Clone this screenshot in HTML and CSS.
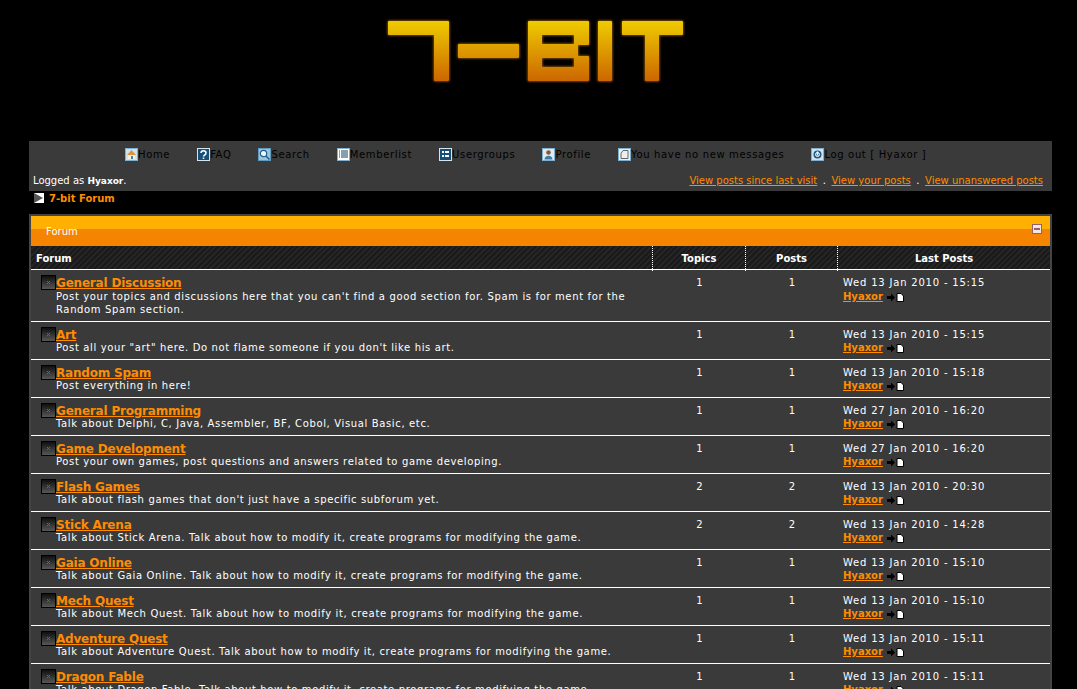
FILE: index.html
```html
<!DOCTYPE html>
<html>
<head>
    <title>7-bit Forum</title>
    <meta name="viewport" content="width=device-width, initial-scale=1">
    <link rel="stylesheet" href="styles.css">
</head>
<body>

<!-- icon sprites -->
<svg class="sprites" width="0" height="0">
    <defs>
        <linearGradient id="logoFill" gradientUnits="userSpaceOnUse" x1="0" y1="21" x2="0" y2="81">
            <stop offset="0" stop-color="#eecc00"/>
            <stop offset="1" stop-color="#cc6600"/>
        </linearGradient>
        <linearGradient id="boardFill" x1="0" y1="0" x2="0" y2="1">
            <stop offset="0" stop-color="#0c0c0c"/>
            <stop offset="1" stop-color="#5a5a5a"/>
        </linearGradient>
        <filter id="logoGlow" x="-10%" y="-20%" width="120%" height="140%">
            <feGaussianBlur stdDeviation="0.8"/>
        </filter>
        <path id="logoMark" fill-rule="evenodd" stroke-linejoin="round" d="M389 22H448V80H435V34H389Z M459 45H518V57H459Z M529 22H588V44H577V57H588V80H529Z M541 34V45H575V34Z M541 57V68H575V57Z M599 22H611V80H599Z M623 22H682V34H658V80H646V34H623Z"/>
        <symbol id="i-board" viewBox="0 0 15 15">
            <rect x="0.5" y="0.5" width="14" height="14" fill="url(#boardFill)" stroke="#000"/>
            <path d="M6 6l3 3M9 6l-3 3" stroke="#666"/>
        </symbol>
        <symbol id="i-go" viewBox="0 0 17 9">
            <path d="M0 3h4V0.500L8 4.500 4 8.500V6H0z" fill="#000"/>
            <path d="M10 0.500h4l2.500 2.500v5.500H10z" fill="#fff" stroke="#000"/>
        </symbol>
    </defs>
</svg>

<!-- Logo -->
<div class="logo">
    <svg width="330" height="100" viewBox="370 0 330 100" role="img" aria-label="7-bit">
        <use href="#logoMark" fill="#a06000" stroke="#a06000" stroke-width="3" filter="url(#logoGlow)"/>
        <use href="#logoMark" fill="url(#logoFill)" stroke="url(#logoFill)" stroke-width="2"/>
    </svg>
</div>

<!-- Top navigation -->
<div class="navbar">
    <div class="nav-links">
        <a href="#"><svg class="nav-icon" viewBox="0 0 13 13"><rect x="0.5" y="0.5" width="12" height="12" fill="#cfe2ee" stroke="#7fb0d0"/><path d="M2 7l4.500-5 4.500 5z" fill="#e0913a"/><rect x="3" y="7" width="7" height="4" fill="#f4f0e0"/><rect x="6" y="8" width="2" height="3" fill="#4a7fb0"/></svg>Home</a>
        <a href="#"><svg class="nav-icon" viewBox="0 0 13 13"><rect x="0.5" y="0.5" width="12" height="12" fill="#164f78" stroke="#d4e4ee"/><path d="M4 5c0-3 5-3 5 0 0 2-2.500 2-2.500 3.500M6.500 9.500v1.500" fill="none" stroke="#fff" stroke-width="1.500"/></svg>FAQ</a>
        <a href="#"><svg class="nav-icon" viewBox="0 0 13 13"><rect x="0.5" y="0.5" width="12" height="12" fill="#9cc4dc" stroke="#5f9cc0"/><circle cx="5.500" cy="5.500" r="3.200" fill="#eef6fa" stroke="#1f5f8a" stroke-width="1.200"/><path d="M8 8l3.500 3.500" stroke="#1f5f8a" stroke-width="1.500"/></svg>Search</a>
        <a href="#"><svg class="nav-icon" viewBox="0 0 13 13"><rect x="0.5" y="0.5" width="12" height="12" fill="#fff" stroke="#7fb0d0"/><path d="M2 3h1M4 3h7M2 5h1M4 5h7M2 7h1M4 7h7M2 9h1M4 9h7" stroke="#123f63"/></svg>Memberlist</a>
        <a href="#"><svg class="nav-icon" viewBox="0 0 13 13"><rect x="0.5" y="0.5" width="12" height="12" fill="#164f78" stroke="#d4e4ee"/><path d="M3 4h2M6 4h4M3 8h2M6 8h4" stroke="#fff" stroke-width="2"/></svg>Usergroups</a>
        <a href="#"><svg class="nav-icon" viewBox="0 0 13 13"><rect x="0.5" y="0.5" width="12" height="12" fill="#dfeaf2" stroke="#7fb0d0"/><circle cx="6.500" cy="4.500" r="2.300" fill="#8a5a34"/><path d="M2.500 11.500c0-5 8-5 8 0z" fill="#3d7ba8"/></svg>Profile</a>
        <a href="#"><svg class="nav-icon" viewBox="0 0 13 13"><rect x="0.5" y="0.5" width="12" height="12" fill="#e6f0f6" stroke="#7fb0d0"/><path d="M5 2.500h5v8H3v-5z" fill="#eee" stroke="#666"/></svg>You have no new messages</a>
        <a href="#"><svg class="nav-icon" viewBox="0 0 13 13"><rect x="0.5" y="0.5" width="12" height="12" fill="#cfe2ee" stroke="#7fb0d0"/><circle cx="6.500" cy="6.500" r="4" fill="#1c5a86"/><path d="M6.500 3.500v4" stroke="#fff" stroke-width="1.500"/><circle cx="6.500" cy="6.500" r="2" fill="none" stroke="#fff"/></svg>Log out [ Hyaxor ]</a>
    </div>
    <div class="nav-user">
        <p>Logged as <b>Hyaxor</b>.</p>
        <p class="nav-quick"><a href="#">View posts since last visit</a><span>.</span><a href="#">View your posts</a><span>.</span><a href="#">View unanswered posts</a></p>
    </div>
</div>

<!-- Breadcrumb -->
<div class="crumb">
    <svg width="10" height="10" viewBox="0 0 10 10"><rect width="10" height="10" fill="#fff"/><path d="M0 0l9 5-9 5z" fill="#555"/></svg>
    <a href="#">7-bit Forum</a>
</div>

<!-- Forum box -->
<div class="category">
    <div class="category-title">
        <span>Forum</span>
        <svg class="collapse" width="10" height="10" viewBox="0 0 10 10"><rect x="0.500" y="0.500" width="9" height="9" fill="#f0e6e6" stroke="#96606a"/><rect x="2" y="4" width="6" height="2" fill="#96606a"/></svg>
    </div>
    <div class="row head">
        <div class="col-forum">Forum</div>
        <div class="col-num">Topics</div>
        <div class="col-num">Posts</div>
        <div class="col-last">Last Posts</div>
    </div>

    <div class="row forum">
        <div class="col-forum">
            <svg class="board"><use href="#i-board"/></svg>
            <div><a class="title" href="#">General Discussion</a><p>Post your topics and discussions here that you can't find a good section for. Spam is for ment for the Random Spam section.</p></div>
        </div>
        <div class="col-num">1</div>
        <div class="col-num">1</div>
        <div class="col-last"><p>Wed 13 Jan 2010 - 15:15</p><a href="#">Hyaxor</a><svg class="go"><use href="#i-go"/></svg></div>
    </div>
    <div class="row forum">
        <div class="col-forum">
            <svg class="board"><use href="#i-board"/></svg>
            <div><a class="title" href="#">Art</a><p>Post all your "art" here. Do not flame someone if you don't like his art.</p></div>
        </div>
        <div class="col-num">1</div>
        <div class="col-num">1</div>
        <div class="col-last"><p>Wed 13 Jan 2010 - 15:15</p><a href="#">Hyaxor</a><svg class="go"><use href="#i-go"/></svg></div>
    </div>
    <div class="row forum">
        <div class="col-forum">
            <svg class="board"><use href="#i-board"/></svg>
            <div><a class="title" href="#">Random Spam</a><p>Post everything in here!</p></div>
        </div>
        <div class="col-num">1</div>
        <div class="col-num">1</div>
        <div class="col-last"><p>Wed 13 Jan 2010 - 15:18</p><a href="#">Hyaxor</a><svg class="go"><use href="#i-go"/></svg></div>
    </div>
    <div class="row forum">
        <div class="col-forum">
            <svg class="board"><use href="#i-board"/></svg>
            <div><a class="title" href="#">General Programming</a><p>Talk about Delphi, C, Java, Assembler, BF, Cobol, Visual Basic, etc.</p></div>
        </div>
        <div class="col-num">1</div>
        <div class="col-num">1</div>
        <div class="col-last"><p>Wed 27 Jan 2010 - 16:20</p><a href="#">Hyaxor</a><svg class="go"><use href="#i-go"/></svg></div>
    </div>
    <div class="row forum">
        <div class="col-forum">
            <svg class="board"><use href="#i-board"/></svg>
            <div><a class="title" href="#">Game Development</a><p>Post your own games, post questions and answers related to game developing.</p></div>
        </div>
        <div class="col-num">1</div>
        <div class="col-num">1</div>
        <div class="col-last"><p>Wed 27 Jan 2010 - 16:20</p><a href="#">Hyaxor</a><svg class="go"><use href="#i-go"/></svg></div>
    </div>
    <div class="row forum">
        <div class="col-forum">
            <svg class="board"><use href="#i-board"/></svg>
            <div><a class="title" href="#">Flash Games</a><p>Talk about flash games that don't just have a specific subforum yet.</p></div>
        </div>
        <div class="col-num">2</div>
        <div class="col-num">2</div>
        <div class="col-last"><p>Wed 13 Jan 2010 - 20:30</p><a href="#">Hyaxor</a><svg class="go"><use href="#i-go"/></svg></div>
    </div>
    <div class="row forum">
        <div class="col-forum">
            <svg class="board"><use href="#i-board"/></svg>
            <div><a class="title" href="#">Stick Arena</a><p>Talk about Stick Arena. Talk about how to modify it, create programs for modifying the game.</p></div>
        </div>
        <div class="col-num">2</div>
        <div class="col-num">2</div>
        <div class="col-last"><p>Wed 13 Jan 2010 - 14:28</p><a href="#">Hyaxor</a><svg class="go"><use href="#i-go"/></svg></div>
    </div>
    <div class="row forum">
        <div class="col-forum">
            <svg class="board"><use href="#i-board"/></svg>
            <div><a class="title" href="#">Gaia Online</a><p>Talk about Gaia Online. Talk about how to modify it, create programs for modifying the game.</p></div>
        </div>
        <div class="col-num">1</div>
        <div class="col-num">1</div>
        <div class="col-last"><p>Wed 13 Jan 2010 - 15:10</p><a href="#">Hyaxor</a><svg class="go"><use href="#i-go"/></svg></div>
    </div>
    <div class="row forum">
        <div class="col-forum">
            <svg class="board"><use href="#i-board"/></svg>
            <div><a class="title" href="#">Mech Quest</a><p>Talk about Mech Quest. Talk about how to modify it, create programs for modifying the game.</p></div>
        </div>
        <div class="col-num">1</div>
        <div class="col-num">1</div>
        <div class="col-last"><p>Wed 13 Jan 2010 - 15:10</p><a href="#">Hyaxor</a><svg class="go"><use href="#i-go"/></svg></div>
    </div>
    <div class="row forum">
        <div class="col-forum">
            <svg class="board"><use href="#i-board"/></svg>
            <div><a class="title" href="#">Adventure Quest</a><p>Talk about Adventure Quest. Talk about how to modify it, create programs for modifying the game.</p></div>
        </div>
        <div class="col-num">1</div>
        <div class="col-num">1</div>
        <div class="col-last"><p>Wed 13 Jan 2010 - 15:11</p><a href="#">Hyaxor</a><svg class="go"><use href="#i-go"/></svg></div>
    </div>
    <div class="row forum">
        <div class="col-forum">
            <svg class="board"><use href="#i-board"/></svg>
            <div><a class="title" href="#">Dragon Fable</a><p>Talk about Dragon Fable. Talk about how to modify it, create programs for modifying the game.</p></div>
        </div>
        <div class="col-num">1</div>
        <div class="col-num">1</div>
        <div class="col-last"><p>Wed 13 Jan 2010 - 15:11</p><a href="#">Hyaxor</a><svg class="go"><use href="#i-go"/></svg></div>
    </div>
</div>

</body>
</html>
```

FILE: styles.css
```css
/* Base */
html {
    height: 689px;
    overflow: hidden;
}

body {
    margin: 0;
    padding: 0 25px 0 29px;
    background-color: #000;
    color: #fff;
    font-family: "DejaVu Sans", Verdana, sans-serif;
    font-size: 10px;
}

p {
    margin: 0;
}

a {
    color: #ff8c00;
}

.sprites {
    position: absolute;
}

/* Logo */
.logo {
    height: 141px;
    display: flex;
    justify-content: center;
}

.logo svg {
    margin-right: 11px;
}

/* Navbar */
.navbar {
    height: 50px;
    background-color: #3a3a3a;
}

.nav-links {
    display: flex;
    gap: 27px;
    height: 28px;
    padding: 6px 0 0 96px;
    box-sizing: border-box;
    letter-spacing: 0.65px;
}

.nav-links a {
    display: flex;
    align-items: center;
    height: 15px;
    color: #000;
    text-decoration: none;
    white-space: nowrap;
}

.nav-icon {
    width: 13px;
    height: 13px;
}

.nav-user {
    display: flex;
    justify-content: space-between;
    padding: 5px 9px 0 4px;
    line-height: 13px;
}

.nav-user b {
    font-size: 9px;
}

.nav-quick span {
    margin: 0 5.5px;
}

/* Breadcrumb */
.crumb {
    display: flex;
    align-items: flex-start;
    gap: 5px;
    height: 23px;
    padding: 3px 0 0 5px;
    box-sizing: border-box;
    line-height: 10px;
}

.crumb svg {
    margin-top: -1px;
}

.crumb a {
    font-weight: bold;
    text-decoration: none;
}

/* Forum box */
.category {
    border: 2px solid #444;
    border-bottom: 0;
}

.category-title {
    display: flex;
    justify-content: space-between;
    height: 30px;
    padding: 9px 8px 0 15px;
    box-sizing: border-box;
    background: linear-gradient(#ffb000 13px, #f58500 13px);
    line-height: 13px;
}

.collapse {
    margin-top: -1px;
}

.row {
    display: grid;
    grid-template-columns: 621px 93px 92px 1fr;
}

.head {
    height: 24px;
    border-bottom: 1px solid #fff;
    box-sizing: border-box;
    background: repeating-linear-gradient(135deg, #1a1a1a 0, #1a1a1a 2px, #252525 2px, #252525 4px);
    font-weight: bold;
    line-height: 25px;
}

.head .col-forum {
    padding-left: 5px;
}

.head .col-num,
.head .col-last {
    border-left: 1px dotted #fff;
    text-align: center;
}

.forum {
    background-color: #3a3a3a;
    border-bottom: 1px solid #fff;
    line-height: 13px;
}

.forum .col-forum {
    display: flex;
    padding: 6px 10px 5px 10px;
    letter-spacing: 0.64px;
}

/* the first row sits one pixel taller than the rest */
.head + .forum .col-forum p {
    margin-top: 1px;
}

.head + .forum .col-last p {
    line-height: 14px;
}

.board {
    flex: none;
    width: 15px;
    height: 15px;
    margin-top: -1px;
}

.title {
    display: block;
    margin-bottom: -2px;
    font-size: 12px;
    font-weight: bold;
    line-height: 15px;
    letter-spacing: -0.2px;
}

.forum .col-num {
    padding: 6px 0 0 2px;
    text-align: center;
}

.forum .col-last {
    padding: 6px 0 0 6px;
}

.col-last p {
    letter-spacing: 0.8px;
}

.col-last a {
    font-weight: bold;
}

.go {
    width: 17px;
    height: 9px;
    margin-left: 4px;
    vertical-align: -2px;
}
```
